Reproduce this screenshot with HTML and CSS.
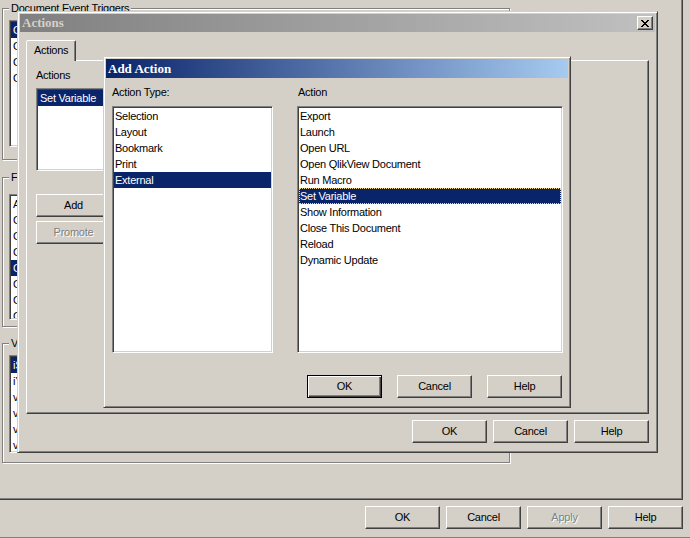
FILE: index.html
```html
<!DOCTYPE html>
<html lang="en">
<head>
<meta charset="utf-8">
<title>Add Action</title>
<link rel="stylesheet" href="styles.css">
</head>
<body>
<div class="base">
  <div class="base-page">
    <div class="group g1">
      <span class="group-label">Document Event Triggers</span>
      <div class="list g-list gl1">
        <div class="rows">
          <div class="row sel">OnAnySelect</div>
          <div class="row">OnOpen</div>
          <div class="row">OnPostReduceData</div>
          <div class="row">OnPostReload</div>
        </div>
      </div>
    </div>
    <div class="group g2">
      <span class="group-label">Field Event Triggers</span>
      <div class="list g-list gl2">
        <div class="rows">
          <div class="row">Amount</div>
          <div class="row">CategoryID</div>
          <div class="row">CategoryName</div>
          <div class="row">City</div>
          <div class="row sel">Country</div>
          <div class="row">CustomerID</div>
          <div class="row">CompanyName</div>
          <div class="row">ContactName</div>
        </div>
      </div>
    </div>
    <div class="group g3">
      <span class="group-label">Variable Event Triggers</span>
      <div class="list g-list gl3">
        <div class="rows">
          <div class="row sel">iStart</div>
          <div class="row">iYear</div>
          <div class="row">vCurrency</div>
          <div class="row">vDate</div>
          <div class="row">vMonth</div>
          <div class="row">vYear</div>
        </div>
      </div>
    </div>
  </div>
  <div class="base-footer">
    <button class="btn">OK</button>
    <button class="btn">Cancel</button>
    <button class="btn disabled">Apply</button>
    <button class="btn">Help</button>
  </div>
</div>

<div class="window win-actions">
  <div class="titlebar inactive">
    <span class="title-text">Actions</span>
    <span class="close">
      <svg width="8" height="7" viewBox="0 0 8 7" shape-rendering="crispEdges"><path fill="#000" d="M0 0h2v1H0zM6 0h2v1H6zM1 1h2v1H1zM5 1h2v1H5zM2 2h4v1H2zM3 3h2v1H3zM2 4h4v1H2zM1 5h2v1H1zM5 5h2v1H5zM0 6h2v1H0zM6 6h2v1H6z"/></svg>
    </span>
  </div>
  <div class="actions-body">
    <div class="tabs"><div class="tab">Actions</div></div>
    <div class="tabpage">
      <div class="label">Actions</div>
      <div class="list act-list">
        <div class="rows">
          <div class="row sel">Set Variable</div>
        </div>
      </div>
      <button class="btn btn-add">Add</button>
      <button class="btn disabled btn-promote">Promote</button>
    </div>
    <div class="btn-row">
      <button class="btn">OK</button>
      <button class="btn">Cancel</button>
      <button class="btn">Help</button>
    </div>
  </div>
</div>

<div class="window win-add">
  <div class="titlebar active">
    <span class="title-text">Add Action</span>
  </div>
  <div class="add-body">
    <div class="label">Action Type:</div>
    <div class="label label-2">Action</div>
    <div class="list add-list">
      <div class="rows">
        <div class="row">Selection</div>
        <div class="row">Layout</div>
        <div class="row">Bookmark</div>
        <div class="row">Print</div>
        <div class="row sel">External</div>
      </div>
    </div>
    <div class="list add-list">
      <div class="rows">
        <div class="row">Export</div>
        <div class="row">Launch</div>
        <div class="row">Open URL</div>
        <div class="row">Open QlikView Document</div>
        <div class="row">Run Macro</div>
        <div class="row sel focus">Set Variable</div>
        <div class="row">Show Information</div>
        <div class="row">Close This Document</div>
        <div class="row">Reload</div>
        <div class="row">Dynamic Update</div>
      </div>
    </div>
    <div class="add-buttons">
      <button class="btn default">OK</button>
      <button class="btn">Cancel</button>
      <button class="btn">Help</button>
    </div>
  </div>
</div>
</body>
</html>
```
FILE: styles.css
```css
* { box-sizing: border-box; }
html, body { margin: 0; padding: 0; }
body {
  width: 690px;
  height: 538px;
  overflow: hidden;
  position: relative;
  background: #d4d0c8;
  color: #000;
  font-family: "Liberation Sans", Arial, sans-serif;
  font-size: 11px;
  letter-spacing: -0.25px;
}

/* ---------- base window ---------- */
.base { width: 690px; height: 538px; display: flex; flex-direction: column; }
.base-page {
  width: 683px;
  height: 500px;
  flex: none;
  border-right: 1px solid #404040;
  border-bottom: 1px solid #404040;
  box-shadow: inset -1px -1px #808080;
  padding: 8px 0 0 2px;
  display: flex;
  flex-direction: column;
}
.base-footer {
  height: 38px;
  flex: none;
  padding: 6px 7px 0 0;
  display: flex;
  justify-content: flex-end;
  align-items: flex-start;
  gap: 6px;
  border-bottom: 1px solid #808080;
}

.group {
  width: 508px;
  flex: none;
  border: 1px solid #808080;
  box-shadow: inset 1px 1px #fff, 1px 1px #fff;
  display: flex;
  flex-direction: column;
  align-items: flex-start;
}
.group-label {
  margin: -7px 0 0 6px;
  padding: 0 2px;
  line-height: 13px;
  height: 13px;
  background: #d4d0c8;
  white-space: nowrap;
}
.g1 { height: 152px; }
.g2 { height: 150px; margin-top: 17px; }
.g3 { height: 120px; margin-top: 16px; }

.g-list { width: 480px; margin-left: 6px; }
.gl1 { height: 127px; margin-top: 5px; }
.gl2 { height: 126px; margin-top: 10px; }
.gl3 { height: 98px; margin-top: 5px; }

/* ---------- list boxes ---------- */
.list {
  background: #fff;
  border: 1px solid;
  border-color: #808080 #fff #fff #808080;
  box-shadow: inset 1px 1px #404040, inset -1px -1px #d4d0c8;
  padding: 1px;
  flex: none;
}
.rows { height: 100%; overflow: hidden; }
.row {
  height: 16px;
  line-height: 16px;
  padding-left: 2px;
  white-space: nowrap;
}
.row.sel { background: #0a246a; color: #fff; }
.row.focus { outline: 1px dotted #f5db95; outline-offset: -1px; }

/* ---------- buttons ---------- */
.btn {
  width: 75px;
  height: 23px;
  flex: none;
  margin: 0;
  padding: 0;
  border: 1px solid;
  border-color: #fff #404040 #404040 #fff;
  box-shadow: inset -1px -1px #808080;
  background: #d4d0c8;
  color: #000;
  font-family: inherit;
  font-size: 11px;
  letter-spacing: -0.25px;
  line-height: 13px;
  display: flex;
  align-items: center;
  justify-content: center;
}
.btn.default {
  border: 1px solid #000;
  box-shadow: inset 1px 1px #fff, inset -1px -1px #404040, inset -2px -2px #808080;
}
.btn.disabled { color: #808080; text-shadow: 1px 1px 0 #fff; }

/* ---------- windows ---------- */
.window {
  position: absolute;
  display: flex;
  flex-direction: column;
  background: #d4d0c8;
  border: 1px solid;
  border-color: #d4d0c8 #404040 #404040 #d4d0c8;
  box-shadow: inset 1px 1px #fff, inset -1px -1px #808080;
  padding: 2px;
}
.win-actions { left: 17px; top: 11px; width: 641px; height: 442px; }
.win-add { left: 103px; top: 56px; width: 468px; height: 352px; }

.titlebar {
  height: 18px;
  flex: none;
  display: flex;
  align-items: center;
  padding: 0 2px;
  font-family: "Liberation Serif", "Times New Roman", serif;
  font-weight: bold;
  font-size: 13px;
  letter-spacing: 0;
  white-space: nowrap;
}
.win-add .titlebar { height: 19px; }
.titlebar.inactive { background: linear-gradient(to right, #808080, #c0c0c0); color: #d4d0c8; }
.titlebar.active { background: linear-gradient(to right, #0a246a, #a6caf0); color: #fff; }

.close {
  margin-left: auto;
  width: 16px;
  height: 14px;
  border: 1px solid;
  border-color: #fff #404040 #404040 #fff;
  box-shadow: inset -1px -1px #808080;
  background: #d4d0c8;
  display: flex;
  align-items: center;
  justify-content: center;
  padding-right: 1px;
}
.close svg { display: block; }

/* ---------- Actions dialog ---------- */
.actions-body {
  flex: 1;
  padding: 8px 6px 0 6px;
  display: flex;
  flex-direction: column;
}
.tabs { height: 20px; flex: none; display: flex; position: relative; z-index: 1; }
.tab {
  width: 50px;
  height: 21px;
  padding-left: 7px;
  border: 1px solid;
  border-bottom: none;
  border-color: #fff #404040 transparent #fff;
  border-radius: 2px 2px 0 0;
  box-shadow: inset -1px 0 #808080;
  background: #d4d0c8;
  line-height: 19px;
  white-space: nowrap;
}
.tabpage {
  height: 354px;
  flex: none;
  border: 1px solid;
  border-color: #fff #404040 #404040 #fff;
  box-shadow: inset -1px -1px #808080;
  padding: 8px 9px;
  display: flex;
  flex-direction: column;
  align-items: flex-start;
}
.label { line-height: 13px; height: 13px; white-space: nowrap; }
.act-list { width: 250px; height: 83px; margin-top: 6px; }
.btn-add { margin-top: 23px; }
.btn-promote { margin-top: 4px; }
.btn-row {
  margin-top: 6px;
  display: flex;
  justify-content: flex-end;
  gap: 6px;
}

/* ---------- Add Action dialog ---------- */
.add-body {
  flex: 1;
  padding: 8px 0 0 6px;
  display: grid;
  grid-template-columns: 161px 266px;
  grid-template-rows: 13px 254px auto;
  column-gap: 24px;
  align-content: start;
}
.label-2 { padding-left: 1px; }
.add-list { height: 247px; margin-top: 7px; }
.add-list .row { padding-left: 1px; }
.add-buttons {
  grid-column: 1 / -1;
  margin-top: 22px;
  padding-right: 1px;
  display: flex;
  justify-content: flex-end;
  gap: 15px;
}
```
